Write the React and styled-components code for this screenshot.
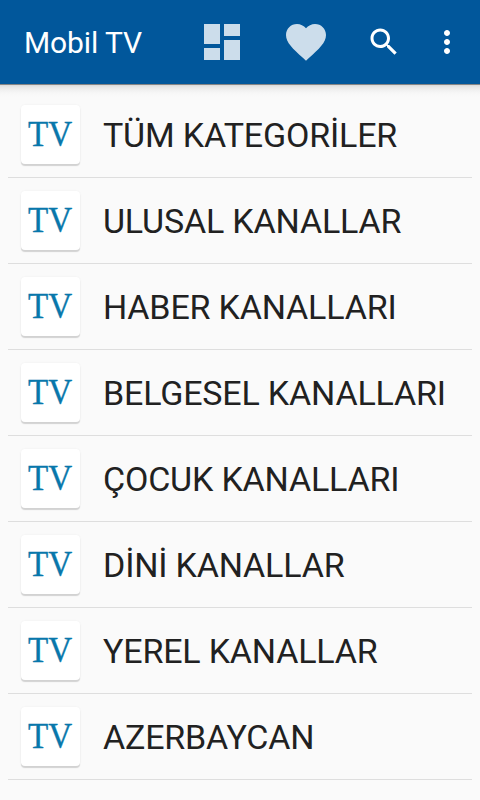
import React from 'react';
import styled, { createGlobalStyle } from 'styled-components';

const GlobalStyle = createGlobalStyle`
  * {
    box-sizing: border-box;
  }
  body {
    margin: 0;
    background: #fafafa;
    font-family: Roboto, sans-serif;
  }
`;

const Screen = styled.div`
  display: flex;
  flex-direction: column;
  width: 480px;
  height: 800px;
  overflow: hidden;
  background: #fafafa;
`;

const Toolbar = styled.header`
  display: flex;
  flex: none;
  align-items: center;
  height: 84px;
  padding-left: 24px;
  background: #01579b;
  color: #ffffff;
`;

const Content = styled.main`
  flex: 1;
  padding: 8px 8px 0;
  background: linear-gradient(
      #858585 0 1px,
      #dadada 1px,
      #e6e6e6 3px,
      #f0f0f0 6px,
      #f7f7f7 9px,
      #fafafa 13px
    )
    no-repeat;
`;

const Title = styled.h1`
  flex: 1;
  margin: 0;
  padding-top: 1px;
  font-size: 30px;
  font-weight: 400;
  line-height: 36px;
  letter-spacing: -0.1px;
`;

const IconButton = styled.button`
  display: flex;
  flex: none;
  align-items: center;
  justify-content: center;
  width: ${(props) => props.$width}px;
  height: 84px;
  padding: 0;
  border: none;
  background: none;
  color: inherit;
  opacity: ${(props) => (props.$faded ? 0.8 : 1)};
`;

const OverflowButton = styled(IconButton)`
  padding-right: 6px;
`;

const List = styled.ul`
  margin: 0;
  padding: 0;
  list-style: none;
`;

const Row = styled.li`
  display: flex;
  align-items: center;
  height: 86px;
  padding-left: 13px;
  border-bottom: 1px solid #dedede;
`;

const Logo = styled.div`
  display: flex;
  flex: none;
  align-items: center;
  justify-content: center;
  width: 59px;
  height: 59px;
  margin-right: 23px;
  padding-right: 1px;
  border-radius: 4px;
  background: #ffffff;
  box-shadow: 0 2px 1px #d2d2d2, 0 0 2px #ececec;
`;

const LogoText = styled.span`
  font-family: 'Liberation Serif', serif;
  font-size: 36px;
  line-height: 59px;
  color: #0877ab;
  -webkit-text-stroke: 0.35px #0877ab;
  transform: scaleX(0.92);
`;

const Name = styled.span`
  font-size: 34px;
  line-height: 40px;
  letter-spacing: -0.18px;
  color: #212121;
  white-space: nowrap;
`;

const icons = {
  dashboard: 'M3 13h8V3H3v10zm0 8h8v-6H3v6zm10 0h8V11h-8v10zm0-18v6h8V3h-8z',
  favorite:
    'M12 21.35l-1.45-1.32C5.4 15.36 2 12.28 2 8.5 2 5.42 4.42 3 7.5 3c1.74 0 3.41.81 4.5 2.09C13.09 3.81 14.76 3 16.5 3 19.58 3 22 5.42 22 8.5c0 3.78-3.4 6.86-8.55 11.54L12 21.35z',
  search:
    'M15.5 14h-.79l-.28-.27C15.41 12.59 16 11.11 16 9.5 16 5.91 13.09 3 9.5 3S3 5.91 3 9.5 5.91 16 9.5 16c1.61 0 3.09-.59 4.23-1.57l.27.28v.79l5 4.99L20.49 19l-4.99-5zm-6 0C7.01 14 5 11.99 5 9.5S7.01 5 9.5 5 14 7.01 14 9.5 11.99 14 9.5 14z',
  more: 'M12 8c1.1 0 2-.9 2-2s-.9-2-2-2-2 .9-2 2 .9 2 2 2zm0 2c-1.1 0-2 .9-2 2s.9 2 2 2 2-.9 2-2-.9-2-2-2zm0 6c-1.1 0-2 .9-2 2s.9 2 2 2 2-.9 2-2-.9-2-2-2z',
};

const categories = [
  'TÜM KATEGORİLER',
  'ULUSAL KANALLAR',
  'HABER KANALLARI',
  'BELGESEL KANALLARI',
  'ÇOCUK KANALLARI',
  'DİNİ KANALLAR',
  'YEREL KANALLAR',
  'AZERBAYCAN',
];

function Icon({ name, size }) {
  return (
    <svg width={size} height={size} viewBox='0 0 24 24' fill='currentColor'>
      <path d={icons[name]} />
    </svg>
  );
}

function App() {
  return (
    <Screen>
      <GlobalStyle />
      <Toolbar>
        <Title>Mobil TV</Title>
        <IconButton $width={84} $faded aria-label='Kategoriler'>
          <Icon name='dashboard' size={48} />
        </IconButton>
        <IconButton $width={84} $faded aria-label='Favoriler'>
          <Icon name='favorite' size={48} />
        </IconButton>
        <IconButton $width={72} aria-label='Ara'>
          <Icon name='search' size={36} />
        </IconButton>
        <OverflowButton $width={60} aria-label='Menü'>
          <Icon name='more' size={36} />
        </OverflowButton>
      </Toolbar>
      <Content>
        <List>
          {categories.map((category) => (
            <Row key={category}>
              <Logo>
                <LogoText>TV</LogoText>
              </Logo>
              <Name>{category}</Name>
            </Row>
          ))}
        </List>
      </Content>
    </Screen>
  );
}

export default App;
